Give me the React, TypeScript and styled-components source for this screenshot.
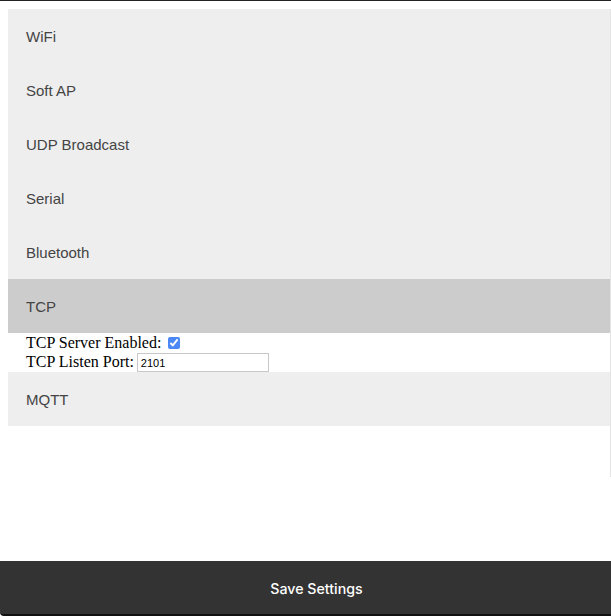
import React, { useState } from 'react'
import styled, { createGlobalStyle } from 'styled-components'

const GlobalStyle = createGlobalStyle`
  html, body {
    margin: 0;
    padding: 0;
    background: #fff;
  }
  body {
    font-family: "Liberation Serif", "Times New Roman", serif;
    font-size: 16px;
  }
`

const Page = styled.div`
  display: flex;
  flex-direction: column;
  height: 616px;
  border-top: 1px solid #222;
  box-sizing: border-box;
`

const Content = styled.div`
  flex: 1;
  padding: 8px 0 0 8px;
`

const Accordion = styled.div`
  border-right: 1px solid #e4e4e4;
  padding-bottom: 51px;
`

interface HeaderProps {
  active: boolean
}

const Header = styled.button<HeaderProps>`
  display: block;
  width: 100%;
  height: 54px;
  padding: 0 18px;
  border: none;
  outline: none;
  text-align: left;
  background: ${props => (props.active ? '#ccc' : '#eee')};
  color: #444;
  font-family: "Liberation Sans", Arial, sans-serif;
  font-size: 15px;
  cursor: pointer;
`

const Panel = styled.div`
  padding: 0 18px 1px;
  background: #fff;
  color: #000;
  line-height: 18px;
`

const Row = styled.div`
  display: flex;
  align-items: center;
  height: 19px;
`

const Check = styled.input`
  width: 12px;
  height: 12px;
  margin: 1px 0 0 7px;
  accent-color: #4b87f5;
`

const PortInput = styled.input`
  box-sizing: border-box;
  width: 132px;
  height: 19px;
  margin: 2px 0 0 3px;
  padding: 0 3px;
  border: 1px solid #c8c8c8;
  font-family: "Liberation Sans", Arial, sans-serif;
  font-size: 11px;
  color: #000;
`

const SaveButton = styled.button`
  width: 611px;
  height: 55px;
  padding: 1px 0 0 22px;
  border: none;
  border-bottom: 2px solid #111;
  border-radius: 0 0 0 4px;
  background: #333;
  color: #fff;
  font-family: Inter, "Liberation Sans", Arial, sans-serif;
  font-size: 14.2px;
  font-weight: 500;
`

const SECTIONS = ['WiFi', 'Soft AP', 'UDP Broadcast', 'Serial', 'Bluetooth', 'TCP', 'MQTT']

export default function App() {
  const [open, setOpen] = useState('TCP')
  const [enabled, setEnabled] = useState(true)
  const [port, setPort] = useState('2101')

  return (
    <>
      <GlobalStyle />
      <Page>
        <Content>
          <Accordion>
            {SECTIONS.map(name => (
              <div key={name}>
                <Header active={open === name} onClick={() => setOpen(open === name ? '' : name)}>
                  {name}
                </Header>
                {open === name && name === 'TCP' && (
                  <Panel>
                    <Row>
                      TCP Server Enabled:
                      <Check type="checkbox" checked={enabled} onChange={e => setEnabled(e.target.checked)} />
                    </Row>
                    <Row>
                      TCP Listen Port:
                      <PortInput type="text" value={port} onChange={e => setPort(e.target.value)} />
                    </Row>
                  </Panel>
                )}
              </div>
            ))}
          </Accordion>
        </Content>
        <SaveButton>Save Settings</SaveButton>
      </Page>
    </>
  )
}
